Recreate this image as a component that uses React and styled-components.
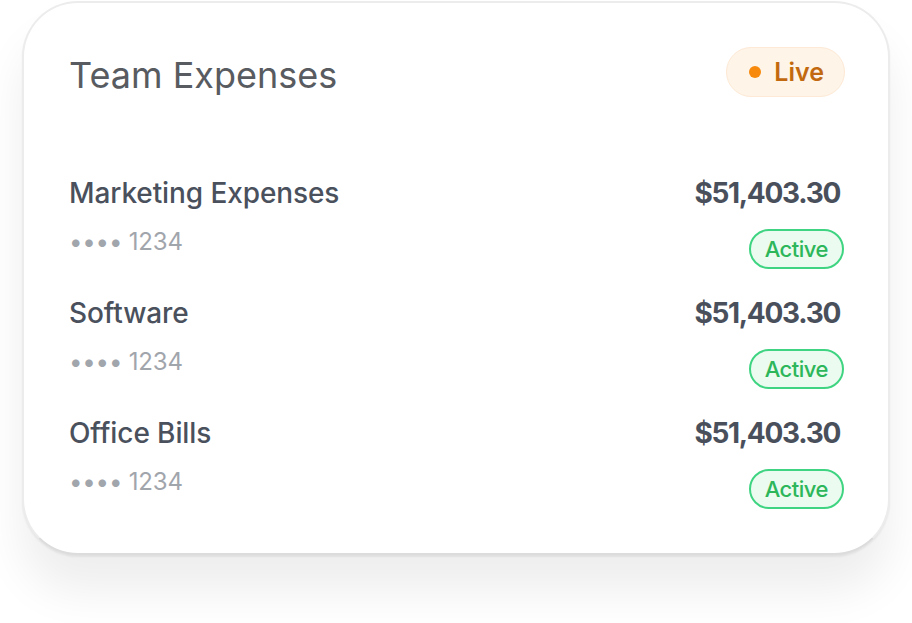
import styled, { createGlobalStyle } from 'styled-components';

const GlobalStyle = createGlobalStyle`
    html, body {
        margin: 0;
        background: #ffffff;
        font-family: Inter, "Noto Sans", sans-serif;
    }
`;

const expenses = [
    { name: 'Marketing Expenses', last4: '1234', amount: '$51,403.30', status: 'Active' },
    { name: 'Software', last4: '1234', amount: '$51,403.30', status: 'Active' },
    { name: 'Office Bills', last4: '1234', amount: '$51,403.30', status: 'Active' },
];

const Page = styled.div`
    padding: 1px 22px 0;
    height: 623px;
    box-sizing: border-box;
`;

const Card = styled.div`
    width: 868px;
    height: 554px;
    box-sizing: border-box;
    background: #ffffff;
    border: 2px solid #ececec;
    border-bottom-color: #dcdcdc;
    border-radius: 56px;
    padding: 44px 44px 0 45px;
    box-shadow: 0 2px 2px rgba(0, 0, 0, 0.06), 0 36px 46px rgba(0, 0, 0, 0.07);
`;

const Header = styled.div`
    display: flex;
    align-items: center;
    justify-content: space-between;
`;

const Title = styled.h2`
    margin: 0;
    padding-top: 6px;
    font-size: 36px;
    font-weight: 400;
    color: #585b5f;
    letter-spacing: 0;
`;

const LivePill = styled.div`
    display: flex;
    align-items: center;
    gap: 13px;
    height: 50px;
    box-sizing: border-box;
    padding: 0 20px 0 22px;
    margin-right: -1px;
    border-radius: 25px;
    background: #fef4e8;
    border: 1px solid #fde9d5;
    font-size: 25px;
    font-weight: 600;
    color: #c2690f;
`;

const Dot = styled.span`
    width: 12px;
    height: 12px;
    border-radius: 50%;
    background: #f7890c;
`;

const List = styled.div`
    display: flex;
    flex-direction: column;
    gap: 27px;
    margin-top: 79px;
`;

const Row = styled.div`
    display: flex;
    justify-content: space-between;
`;

const Left = styled.div`
    display: flex;
    flex-direction: column;
    gap: 17px;
`;

const Right = styled.div`
    display: flex;
    flex-direction: column;
    align-items: flex-end;
    gap: 19px;
`;

const Name = styled.div`
    font-size: 28px;
    line-height: 34px;
    font-weight: 500;
    color: #4a515d;
    letter-spacing: -0.1px;
`;

const Card4 = styled.div`
    font-size: 24px;
    line-height: 30px;
    color: #a1a5ac;
    letter-spacing: -0.2px;
`;

const Amount = styled.div`
    margin-right: 4px;
    font-size: 28px;
    line-height: 34px;
    font-weight: 700;
    color: #4a505b;
    letter-spacing: -1.3px;
`;

const StatusPill = styled.div`
    height: 40px;
    box-sizing: border-box;
    display: flex;
    align-items: center;
    padding: 0 14px;
    border-radius: 20px;
    border: 2px solid ${({ status }) => status === 'Active' ? '#3fd481' : '#f5b048'};
    background: ${({ status }) => status === 'Active' ? '#ebfbf0' : '#fff6e8'};
    color: ${({ status }) => status === 'Active' ? '#2db65a' : '#c2690f'};
    font-size: 22px;
    font-weight: 500;
    letter-spacing: -0.5px;
`;

const App = () => {
    return (
        <Page>
            <GlobalStyle />
            <Card>
                <Header>
                    <Title>Team Expenses</Title>
                    <LivePill>
                        <Dot />
                        Live
                    </LivePill>
                </Header>
                <List>
                    {expenses.map((item, index) => (
                        <Row key={index}>
                            <Left>
                                <Name>{item.name}</Name>
                                <Card4>•••• {item.last4}</Card4>
                            </Left>
                            <Right>
                                <Amount>{item.amount}</Amount>
                                <StatusPill status={item.status}>{item.status}</StatusPill>
                            </Right>
                        </Row>
                    ))}
                </List>
            </Card>
        </Page>
    );
};

export default App;
